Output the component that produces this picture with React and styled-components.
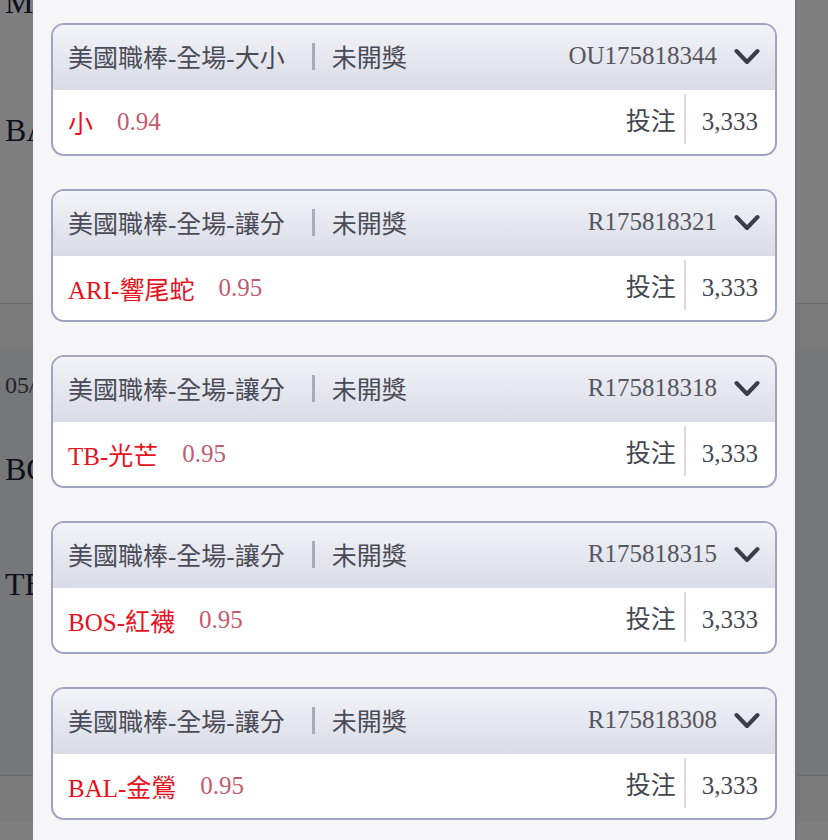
import styled, { createGlobalStyle } from 'styled-components';

const GlobalStyle = createGlobalStyle`
	html, body {
		margin: 0;
		padding: 0;
		height: 100%;
		overflow: hidden;
		background: #ffffff;
		font-family: "Liberation Serif", "Noto Sans CJK TC", serif;
	}
`;

const Page = styled.div`
	height: 840px;
	overflow: hidden;
	color: #1c1d3d;
`;

const PageTop = styled.div`
	height: 303px;
	background: #ffffff;
	padding-left: 5px;
	font-size: 32px;
	line-height: 1;
	h2 {
		margin: 0;
		font-size: 32px;
		font-weight: normal;
		transform: translateY(-14px);
	}
	p {
		margin: 82px 0 0;
	}
`;

const PageBand = styled.div`
	height: 46px;
	border-top: 1px solid #d6d6d6;
	background: #f4f4f4;
`;

const Match = styled.div`
	height: 425px;
	background: #edeef3;
	padding: 22px 0 0 5px;
	box-sizing: border-box;
	span {
		display: block;
		font-size: 24px;
		color: #45475a;
	}
	p {
		margin: 0;
		font-size: 32px;
	}
`;

const Overlay = styled.div`
	position: fixed;
	inset: 0;
	background: rgba(0, 0, 0, 0.5);
`;

const Modal = styled.div`
	position: fixed;
	top: 0;
	bottom: 0;
	left: 33px;
	right: 31px;
	background: #f6f6f8;
	border-right: 2px solid #767676;
	padding: 23px 18px;
	display: flex;
	flex-direction: column;
	gap: 33px;
	overflow: hidden;
`;

const Card = styled.div`
	border: 2px solid #a0a4c2;
	border-radius: 13px;
	overflow: hidden;
	background: #ffffff;
	flex-shrink: 0;
`;

const CardHeader = styled.div`
	height: 65px;
	box-sizing: border-box;
	padding: 0 15px 4px;
	display: flex;
	align-items: center;
	background: linear-gradient(#f3f4f8, #d9dbe6);
	color: #4a4b56;
	font-size: 25px;
`;

const Divider = styled.span`
	width: 3px;
	height: 27px;
	background: #aaabb4;
	margin: 2px 17px 0 27px;
`;

const OrderNo = styled.span`
	margin-left: auto;
	color: #555660;
`;

const Chevron = styled.svg`
	width: 26px;
	height: 18px;
	margin-left: 17px;
	margin-top: 2px;
`;

const CardBody = styled.div`
	height: 64px;
	display: flex;
	align-items: center;
	padding: 0 17px 0 15px;
	font-size: 25px;
`;

const Pick = styled.span`
	color: #e6111b;
`;

const Odds = styled.span`
	color: #c45a70;
	margin-left: 24px;
`;

const BetLabel = styled.span`
	margin-left: auto;
	color: #45464f;
	padding-right: 8px;
	border-right: 2px solid #d8dbe6;
	line-height: 44px;
	margin-top: -6px;
	padding-top: 6px;
`;

const Amount = styled.span`
	color: #45464f;
	margin-left: 16px;
`;

const bets = [
	{ type: '美國職棒-全場-大小', no: 'OU175818344', pick: '小', odds: '0.94' },
	{ type: '美國職棒-全場-讓分', no: 'R175818321', pick: 'ARI-響尾蛇', odds: '0.95' },
	{ type: '美國職棒-全場-讓分', no: 'R175818318', pick: 'TB-光芒', odds: '0.95' },
	{ type: '美國職棒-全場-讓分', no: 'R175818315', pick: 'BOS-紅襪', odds: '0.95' },
	{ type: '美國職棒-全場-讓分', no: 'R175818308', pick: 'BAL-金鶯', odds: '0.95' },
];

const App = () => {
	return (
		<>
			<GlobalStyle />
			<Page>
				<PageTop>
					<h2>MLB</h2>
					<p>BAL</p>
				</PageTop>
				<PageBand />
				<Match>
					<span>05/12</span>
					<p style={{ marginTop: 52 }}>BOS</p>
					<p style={{ marginTop: 78 }}>TB</p>
				</Match>
				<PageBand />
			</Page>
			<Overlay />
			<Modal>
				{bets.map((b) => (
					<Card key={b.no}>
						<CardHeader>
							<span>{b.type}</span>
							<Divider />
							<span>未開獎</span>
							<OrderNo>{b.no}</OrderNo>
							<Chevron viewBox="0 0 26 18">
								<polyline points="2.5,3 13,14 23.5,3" fill="none" stroke="#3c3d4a" strokeWidth="4" strokeLinecap="round" strokeLinejoin="round" />
							</Chevron>
						</CardHeader>
						<CardBody>
							<Pick>{b.pick}</Pick>
							<Odds>{b.odds}</Odds>
							<BetLabel>投注</BetLabel>
							<Amount>3,333</Amount>
						</CardBody>
					</Card>
				))}
			</Modal>
		</>
	);
}

export default App;
